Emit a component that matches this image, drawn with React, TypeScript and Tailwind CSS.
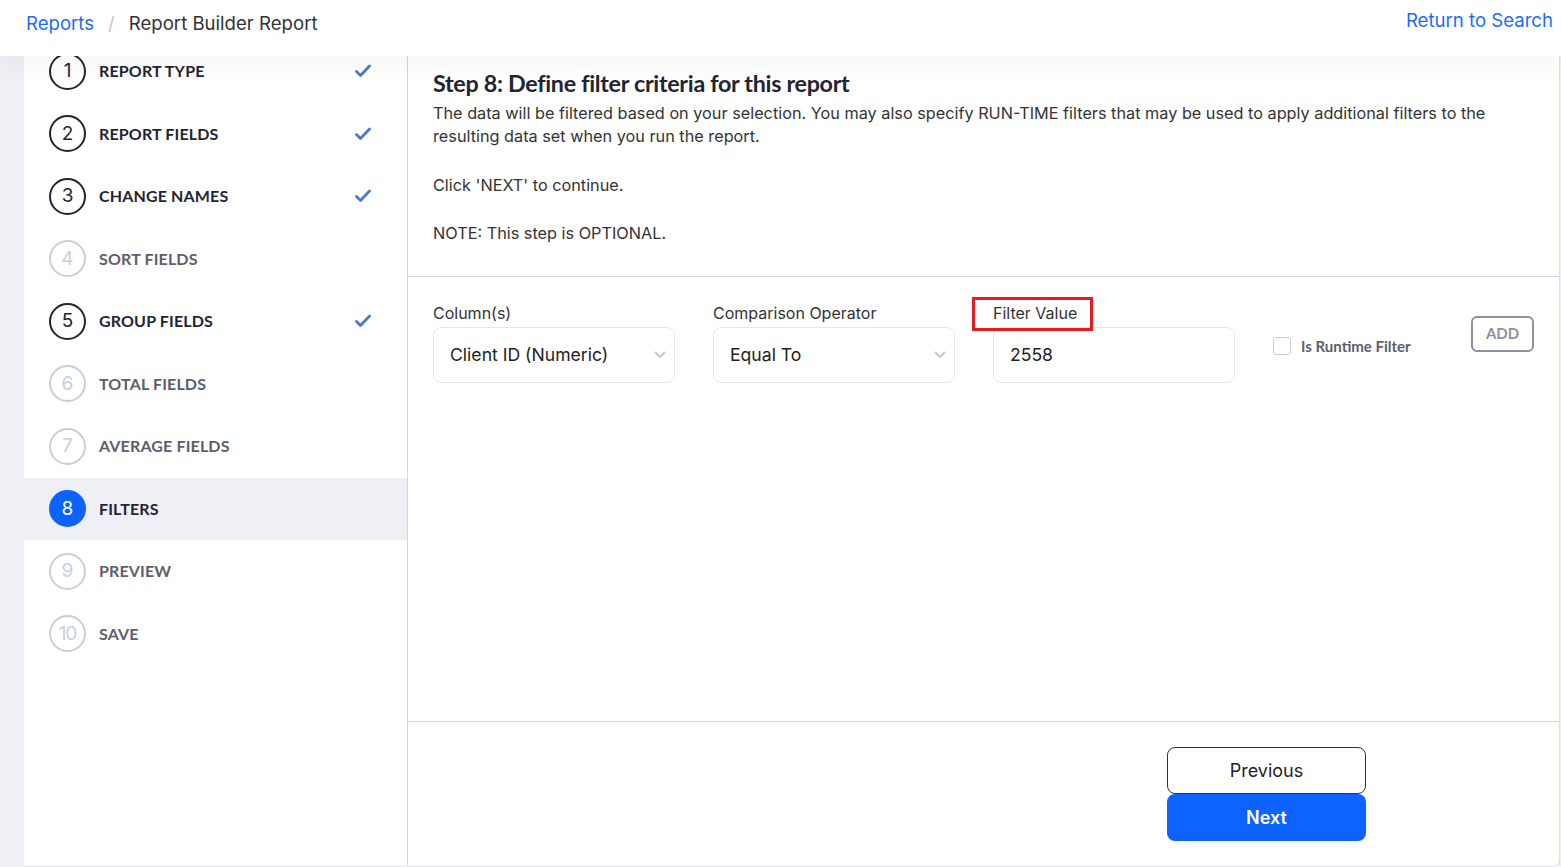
import React from "react";

type Step = { n: number; label: string; state: "done" | "todo" | "active" };

const steps: Step[] = [
  { n: 1, label: "REPORT TYPE", state: "done" },
  { n: 2, label: "REPORT FIELDS", state: "done" },
  { n: 3, label: "CHANGE NAMES", state: "done" },
  { n: 4, label: "SORT FIELDS", state: "todo" },
  { n: 5, label: "GROUP FIELDS", state: "done" },
  { n: 6, label: "TOTAL FIELDS", state: "todo" },
  { n: 7, label: "AVERAGE FIELDS", state: "todo" },
  { n: 8, label: "FILTERS", state: "active" },
  { n: 9, label: "PREVIEW", state: "todo" },
  { n: 10, label: "SAVE", state: "todo" },
];

const inter = "font-['Inter','Noto_Sans',sans-serif]";
const lato = "font-['Lato','Noto_Sans',sans-serif]";

function Check() {
  return (
    <svg width="16" height="14" viewBox="0 0 16 14" className="text-[#4a7bc8]">
      <path d="M1.5 7.5 L5.5 11.5 L14.5 2" fill="none" stroke="currentColor" strokeWidth="2.8" strokeLinecap="round" strokeLinejoin="round" />
    </svg>
  );
}

function Chevron() {
  return (
    <svg width="12" height="8" viewBox="0 0 12 8" className="text-[#c3c7cf]">
      <path d="M1.5 1.5 L6 6 L10.5 1.5" fill="none" stroke="currentColor" strokeWidth="1.8" strokeLinecap="round" strokeLinejoin="round" />
    </svg>
  );
}

function StepRow({ s }: { s: Step }) {
  const circle =
    s.state === "active"
      ? "bg-[#0d63ff] border-[#0d63ff] text-white"
      : s.state === "done"
      ? "border-[#1f2533] text-[#1f2533]"
      : "border-[#c7cfdc] text-[#c7cfdc]";
  const text = s.state === "todo" ? "text-[#5b606b]" : "text-[#1f2533]";
  return (
    <div className={`h-[62.5px] flex items-center pl-[25px] pr-[36px] ${s.state === "active" ? "bg-[#eff0f5]" : ""}`}>
      <div className={`w-[37px] h-[37px] rounded-full border-2 flex items-center justify-center text-[19px] ${inter} ${circle} ${s.n === 10 ? "tracking-[-1px]" : ""}`}>
        {s.n}
      </div>
      <div className={`ml-[13px] flex-1 text-[16px] tracking-[0.15px] font-bold ${lato} ${text}`}>{s.label}</div>
      {s.state === "done" && <Check />}
    </div>
  );
}

export default function App() {
  return (
    <div className={`w-[1561px] h-[867px] bg-[#eef0f5] flex flex-col overflow-hidden ${inter}`}>
      <header className="relative z-10 h-[56px] bg-white shrink-0 flex items-start justify-between pl-[26px] pr-[8px] shadow-[0_6px_28px_rgba(0,0,0,0.05)]">
        <div className="flex items-center text-[18.6px] h-[47px]">
          <span className="text-[#1a6dff]">Reports</span>
          <span className="text-[#c8c8c8] mx-[14px]">/</span>
          <span className="text-[#333]">Report Builder Report</span>
        </div>
        <div className="text-[18.6px] text-[#1a6dff] h-[41px] flex items-center">Return to Search</div>
      </header>
      <div className="-mt-[16px] ml-[24px] mr-[2px] h-[825px] bg-white rounded-b-md flex">
        <aside className="w-[384px] shrink-0 border-r border-[#d6d6d6] bg-white">
          {steps.map((s) => (
            <StepRow key={s.n} s={s} />
          ))}
        </aside>
        <main className="flex-1 flex flex-col border-r border-[#dcdfe6]">
          <div className="px-[25px] pt-[29px] pb-[31px] border-b border-[#cfd5de]">
            <h1 className={`text-[23.3px] leading-[28px] font-bold text-[#1f2533] tracking-[-0.3px] ${lato}`}>
              Step 8: Define filter criteria for this report
            </h1>
            <p className="mt-[4.5px] text-[16.25px] leading-[23px] text-[#333]">
              The data will be filtered based on your selection. You may also specify RUN-TIME filters that may be used to apply additional filters to the resulting data set when you run the report.
            </p>
            <p className="mt-[26px] text-[16.25px] leading-[23px] text-[#333]">Click 'NEXT' to continue.</p>
            <p className="mt-[25px] text-[16.25px] leading-[23px] text-[#333]">NOTE: This step is OPTIONAL.</p>
          </div>
          <div className="flex-1 px-[25px] pt-[25px] flex items-start gap-[38px]">
            <div className="w-[242px]">
              <div className="text-[16px] leading-[22px] text-[#333]">Column(s)</div>
              <div className="mt-[3px] h-[56px] rounded-lg border border-[#e5e7eb] flex items-center justify-between pl-[16px] pr-[8px] text-[17.6px] text-[#222]">
                <span className="mt-[1px]">Client ID (Numeric)</span>
                <Chevron />
              </div>
            </div>
            <div className="w-[242px]">
              <div className="text-[16px] leading-[22px] text-[#333]">Comparison Operator</div>
              <div className="mt-[3px] h-[56px] rounded-lg border border-[#e5e7eb] flex items-center justify-between pl-[16px] pr-[8px] text-[17.6px] text-[#222]">
                <span className="mt-[1px]">Equal To</span>
                <Chevron />
              </div>
            </div>
            <div className="w-[242px]">
              <div className="relative text-[16px] leading-[22px] text-[#333]">
                <div className="absolute left-[-21px] top-[-5px] w-[121px] h-[34px] border-[3px] border-[#e31b23]" />
                <span className="relative">Filter Value</span>
              </div>
              <div className="mt-[3px] h-[56px] rounded-lg border border-[#e5e7eb] flex items-center pl-[16px] text-[17.6px] text-[#222]">
                <span className="mt-[1px]">2558</span>
              </div>
            </div>
            <div className="flex items-center mt-[33px] w-[138px] shrink-0">
              <div className="w-[18px] h-[18px] rounded-[3px] border border-[#c8ccd4] shrink-0" />
              <span className={`ml-[10px] text-[15px] font-bold text-[#5b606b] whitespace-nowrap ${lato}`}>Is Runtime Filter</span>
            </div>
            <div className="ml-[22px] mt-[14px]">
              <div className={`w-[63px] h-[36px] rounded-md border-2 border-[#8c919b] flex items-center justify-center text-[15px] font-bold text-[#8c919b] ${lato}`}>
                ADD
              </div>
            </div>
          </div>
          <div className="h-[144px] shrink-0 border-t border-[#cfd5de] flex justify-end pr-[193px] pt-[25px]">
            <div className="w-[199px] flex flex-col">
              <button className="h-[47px] rounded-lg border border-[#333] bg-white text-[18px] text-[#222]">Previous</button>
              <button className="h-[47px] rounded-lg bg-[#0d63ff] text-[18px] font-semibold text-white">Next</button>
            </div>
          </div>
        </main>
      </div>
    </div>
  );
}
